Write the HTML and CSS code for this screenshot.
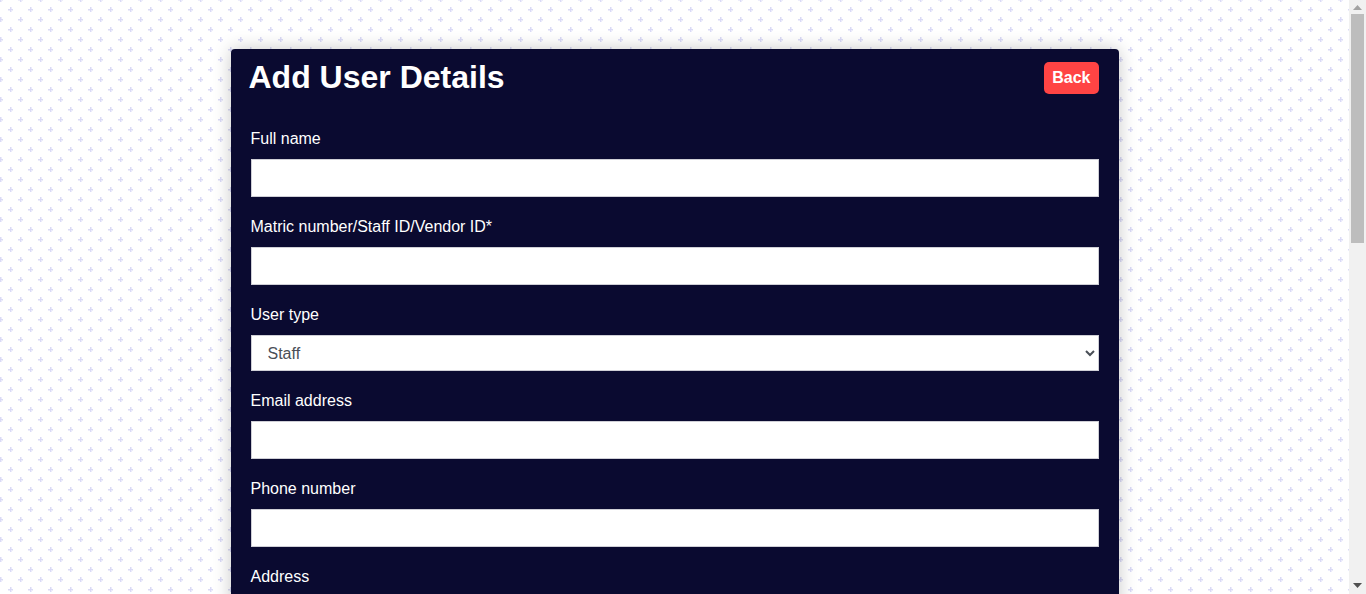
FILE: index.html
```html
<!DOCTYPE html>
<html lang="en">
<head>
<meta charset="utf-8">
<title>Add User Details</title>
<link rel="stylesheet" href="styles.css">
</head>
<body>
<div class="viewport">
  <main class="page">
    <section class="card">
      <header class="card-head">
        <h1 class="title">Add User Details</h1>
        <button class="back-btn" type="button">Back</button>
      </header>
      <form class="form">
        <div class="field">
          <label class="label" for="fullname">Full name</label>
          <input class="input" id="fullname" type="text">
        </div>
        <div class="field">
          <label class="label" for="matric">Matric number/Staff ID/Vendor ID*</label>
          <input class="input" id="matric" type="text">
        </div>
        <div class="field">
          <label class="label" for="usertype">User type</label>
          <select class="select" id="usertype">
            <option>Staff</option>
            <option>Student</option>
            <option>Vendor</option>
          </select>
        </div>
        <div class="field">
          <label class="label" for="email">Email address</label>
          <input class="input" id="email" type="email">
        </div>
        <div class="field">
          <label class="label" for="phone">Phone number</label>
          <input class="input" id="phone" type="tel">
        </div>
        <div class="field">
          <label class="label" for="address">Address</label>
          <input class="input" id="address" type="text">
        </div>
        <div class="field">
          <label class="label" for="password">Password</label>
          <input class="input" id="password" type="password">
        </div>
        <div class="actions">
          <button class="submit-btn" type="submit">Add User</button>
        </div>
      </form>
    </section>
  </main>
  <div class="scrollbar" aria-hidden="true">
    <div class="sb-btn sb-up"><svg width="9" height="5" viewBox="0 0 9 5"><path d="M0 5 L4.5 0 L9 5 Z" fill="#a3a3a3"/></svg></div>
    <div class="sb-thumb"></div>
    <div class="sb-rest"></div>
    <div class="sb-btn sb-down"><svg width="9" height="5" viewBox="0 0 9 5"><path d="M0 0 L4.5 5 L9 0 Z" fill="#505050"/></svg></div>
  </div>
</div>
</body>
</html>
```
FILE: styles.css
```css
html, body {
  margin: 0;
  padding: 0;
  height: 100%;
  overflow: hidden;
}

body {
  font-family: "Liberation Sans", Arial, sans-serif;
}

.viewport {
  display: flex;
  height: 100vh;
}

.page {
  flex: 1;
  min-width: 0;
  overflow: hidden;
  display: flex;
  justify-content: center;
  align-items: flex-start;
  padding-top: 49px;
  background-color: #ffffff;
  background-image: url("data:image/svg+xml;utf8,<svg xmlns='http://www.w3.org/2000/svg' width='20' height='20' shape-rendering='crispEdges'><g fill='%23ececfb'><rect x='8' y='9' width='5' height='2'/><rect x='10' y='7' width='2' height='5'/><rect x='0' y='19' width='3' height='1'/><rect x='0' y='0' width='3' height='1'/><rect x='18' y='19' width='2' height='1'/><rect x='18' y='0' width='2' height='1'/><rect x='0' y='17' width='2' height='3'/><rect x='0' y='0' width='2' height='2'/></g><g fill='%23dadaf6'><rect x='8' y='9' width='5' height='1'/><rect x='10' y='7' width='1' height='5'/><rect x='0' y='19' width='3' height='1'/><rect x='18' y='19' width='2' height='1'/><rect x='0' y='17' width='1' height='3'/><rect x='0' y='0' width='1' height='2'/></g></svg>");
  background-size: 20px 20px;
}

.scrollbar {
  width: 17px;
  flex: none;
  display: flex;
  flex-direction: column;
  background: #f1f1f1;
}

.sb-btn {
  display: flex;
  justify-content: center;
  flex: none;
}

.sb-up {
  height: 14px;
  align-items: flex-start;
  padding-top: 5px;
  box-sizing: border-box;
}

.sb-down {
  height: 17px;
  align-items: flex-start;
  padding-top: 6px;
  box-sizing: border-box;
}

.sb-thumb {
  height: 229px;
  margin: 0 2px;
  background: #bdbdbd;
  flex: none;
}

.sb-rest {
  flex: 1;
}

.card {
  width: 888px;
  flex: none;
  background: #0a0a30;
  border-radius: 4px;
  box-shadow: 0 0 18px rgba(0, 0, 0, 0.22);
  color: #ffffff;
}

.card-head {
  display: flex;
  align-items: center;
  justify-content: space-between;
  padding: 10px 20px 0 18px;
}

.title {
  margin: 0;
  font-size: 32px;
  line-height: 37px;
  font-weight: 700;
}

.back-btn {
  font-family: "Liberation Sans", Arial, sans-serif;
  font-size: 16px;
  font-weight: 700;
  color: #ffffff;
  background: #ff4444;
  border: none;
  border-radius: 5px;
  height: 32px;
  padding: 0 8px;
  cursor: pointer;
}

.form {
  display: flex;
  flex-direction: column;
  padding: 34px 20px 30px;
}

.field {
  display: flex;
  flex-direction: column;
  margin-bottom: 21px;
}

.label {
  font-size: 16px;
  line-height: 18px;
  margin-bottom: 11px;
}

.input {
  box-sizing: border-box;
  height: 38px;
  width: 100%;
  border: 1px solid #cfcfd6;
  border-radius: 0;
  background: #ffffff;
  font-family: "Liberation Sans", Arial, sans-serif;
  font-size: 16px;
  padding: 0 12px;
}

.select {
  box-sizing: border-box;
  height: 36px;
  width: 100%;
  border: 1px solid #cfcfd6;
  border-radius: 0;
  background: #ffffff;
  color: #4a4f57;
  font-family: "Liberation Sans", Arial, sans-serif;
  font-size: 16px;
  padding: 0 12px;
}

.actions {
  display: flex;
  padding-top: 8px;
}

.submit-btn {
  font-family: "Liberation Sans", Arial, sans-serif;
  font-size: 16px;
  font-weight: 700;
  color: #ffffff;
  background: #ff4444;
  border: none;
  border-radius: 5px;
  height: 40px;
  padding: 0 20px;
}
```
